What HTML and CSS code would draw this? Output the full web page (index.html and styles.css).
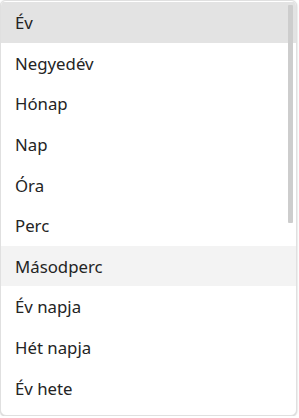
FILE: index.html
```html
<!doctype html>
<html lang="hu">
<head>
    <meta charset="utf-8">
    <title>Időegység</title>
    <link rel="stylesheet" href="styles.css">
</head>
<body>
<div class="listbox">
    <div class="option selected">Év</div>
    <div class="option">Negyedév</div>
    <div class="option">Hónap</div>
    <div class="option">Nap</div>
    <div class="option">Óra</div>
    <div class="option">Perc</div>
    <div class="option hover">Másodperc</div>
    <div class="option">Év napja</div>
    <div class="option">Hét napja</div>
    <div class="option">Év hete</div>
    <div class="scroll-thumb"></div>
</div>
</body>
</html>
```

FILE: styles.css
```css
html, body {
    margin: 0;
    background: #ffffff;
}
body {
    font-family: "Noto Sans", "Open Sans", sans-serif;
    color: #242424;
}
.listbox {
    position: relative;
    box-sizing: border-box;
    width: 297px;
    height: 416px;
    padding: 1px 0;
    border: 1px solid #e0e0e0;
    border-radius: 6px;
    overflow: hidden;
    background: #ffffff;
    box-shadow: 0 1px 2px rgba(0, 0, 0, 0.14), 0 0 2px rgba(0, 0, 0, 0.12);
}
.option {
    height: 40.6px;
    display: flex;
    align-items: center;
    padding: 1px 0 0 14px;
    box-sizing: border-box;
    font-size: 16.8px;
}
.option.selected {
    background: #e3e3e3;
}
.option.hover {
    background: #f3f3f3;
}
.scroll-thumb {
    position: absolute;
    top: 4px;
    right: 3px;
    width: 5px;
    height: 218px;
    background: #cdcdcd;
    border-radius: 1px;
}
```
